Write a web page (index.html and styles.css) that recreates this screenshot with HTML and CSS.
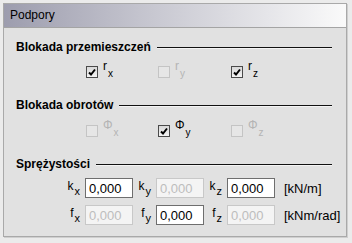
FILE: index.html
```html
<!DOCTYPE html>
<html>
  <head>
    <link rel="stylesheet" href="styles.css">
  </head>
  <body>
    <div class="panel">
      <div class="title">Podpory</div>
      <div class="content">
        <div class="legend">Blokada przemieszczeń</div>
        <div class="checks">
          <label class="check"><span class="box on"><svg viewBox="0 0 8 8"><path d="M1 4.5 L3 6.5 L7 1.5" /></svg></span><span>r<sub>x</sub></span></label>
          <label class="check off"><span class="box"></span><span>r<sub>y</sub></span></label>
          <label class="check"><span class="box on"><svg viewBox="0 0 8 8"><path d="M1 4.5 L3 6.5 L7 1.5" /></svg></span><span>r<sub>z</sub></span></label>
        </div>

        <div class="legend">Blokada obrotów</div>
        <div class="checks second">
          <label class="check off"><span class="box"></span><span>Φ<sub>x</sub></span></label>
          <label class="check"><span class="box on"><svg viewBox="0 0 8 8"><path d="M1 4.5 L3 6.5 L7 1.5" /></svg></span><span>Φ<sub>y</sub></span></label>
          <label class="check off"><span class="box"></span><span>Φ<sub>z</sub></span></label>
        </div>

        <div class="legend">Sprężystości</div>
        <div class="springs">
          <span class="sym">k<sub>x</sub></span><input class="num" value="0,000">
          <span class="sym">k<sub>y</sub></span><input class="num" value="0,000" disabled>
          <span class="sym">k<sub>z</sub></span><input class="num" value="0,000">
          <span class="unit">[kN/m]</span>

          <span class="sym">f<sub>x</sub></span><input class="num" value="0,000" disabled>
          <span class="sym">f<sub>y</sub></span><input class="num" value="0,000">
          <span class="sym">f<sub>z</sub></span><input class="num" value="0,000" disabled>
          <span class="unit">[kNm/rad]</span>
        </div>
      </div>
    </div>
  </body>
</html>
```

FILE: styles.css
```css
body {
  margin: 0;
  background-color: #ebebeb;
  font-family: "Liberation Sans", Arial, sans-serif;
  font-size: 12px;
  color: #000;
}

.panel {
  margin: 3px;
  width: 342px;
  height: 232px;
  border: 1px solid #a9a9a9;
  background-color: #e1e1e1;
  box-shadow: 1px 1px 0 #cfcfcf;
}

.title {
  height: 23px;
  line-height: 23px;
  padding-left: 6px;
  background: linear-gradient(to right, #9d9dae, #c9c9d2 45%, #fafafa);
  border-bottom: 1px solid #a4a4a4;
}

.content {
  padding: 11px 14px 0 12px;
}

.legend {
  display: flex;
  align-items: center;
  gap: 6px;
  height: 16px;
  font-size: 12px;
  font-weight: bold;
}

.legend::after {
  content: "";
  flex: 1;
  height: 1px;
  background-color: #111;
  box-shadow: 0 1px 0 #f4f4f4;
}

.checks {
  display: grid;
  grid-template-columns: 72px 73px 73px;
  height: 20px;
  margin: 7px 0 15px 70px;
}

.checks.second {
  margin-top: 8px;
}

.check {
  display: flex;
  align-items: center;
  gap: 5px;
}

.check span:last-child {
  position: relative;
  top: -3px;
}

.check sub {
  font-size: 10px;
  vertical-align: -7px;
  margin-left: 1px;
}

.check.off {
  color: #b4b4b4;
}

.box {
  width: 10px;
  height: 10px;
  border: 1px solid #c4c4c4;
  background-color: #e6e6e6;
}

.box.on {
  border-color: #4a4a4a;
  background: linear-gradient(#d8d8d8, #f4f4f4);
}

.box svg {
  display: block;
  width: 8px;
  height: 8px;
  margin: 1px;
}

.box path {
  fill: none;
  stroke: #000;
  stroke-width: 2;
}

.springs {
  display: grid;
  grid-template-columns: 15px 48px 15px 48px 15px 48px auto;
  column-gap: 4px;
  row-gap: 7px;
  align-items: center;
  margin: 6px 0 0 50px;
}

.sym {
  text-align: right;
  padding-right: 1px;
}

.sym sub {
  font-size: 11px;
  vertical-align: -5px;
  margin-left: 1px;
}

.num {
  box-sizing: border-box;
  width: 48px;
  height: 20px;
  padding: 1px 3px 0;
  border: 1px solid #6e6e6e;
  background-color: #fff;
  font-family: "Liberation Sans", Arial, sans-serif;
  font-size: 13px;
  color: #000;
}

.num:disabled {
  border-color: #c8c8c8;
  background-color: #f4f4f4;
  color: #bdbdbd;
}

.unit {
  padding-left: 5px;
  font-size: 13px;
}
```
